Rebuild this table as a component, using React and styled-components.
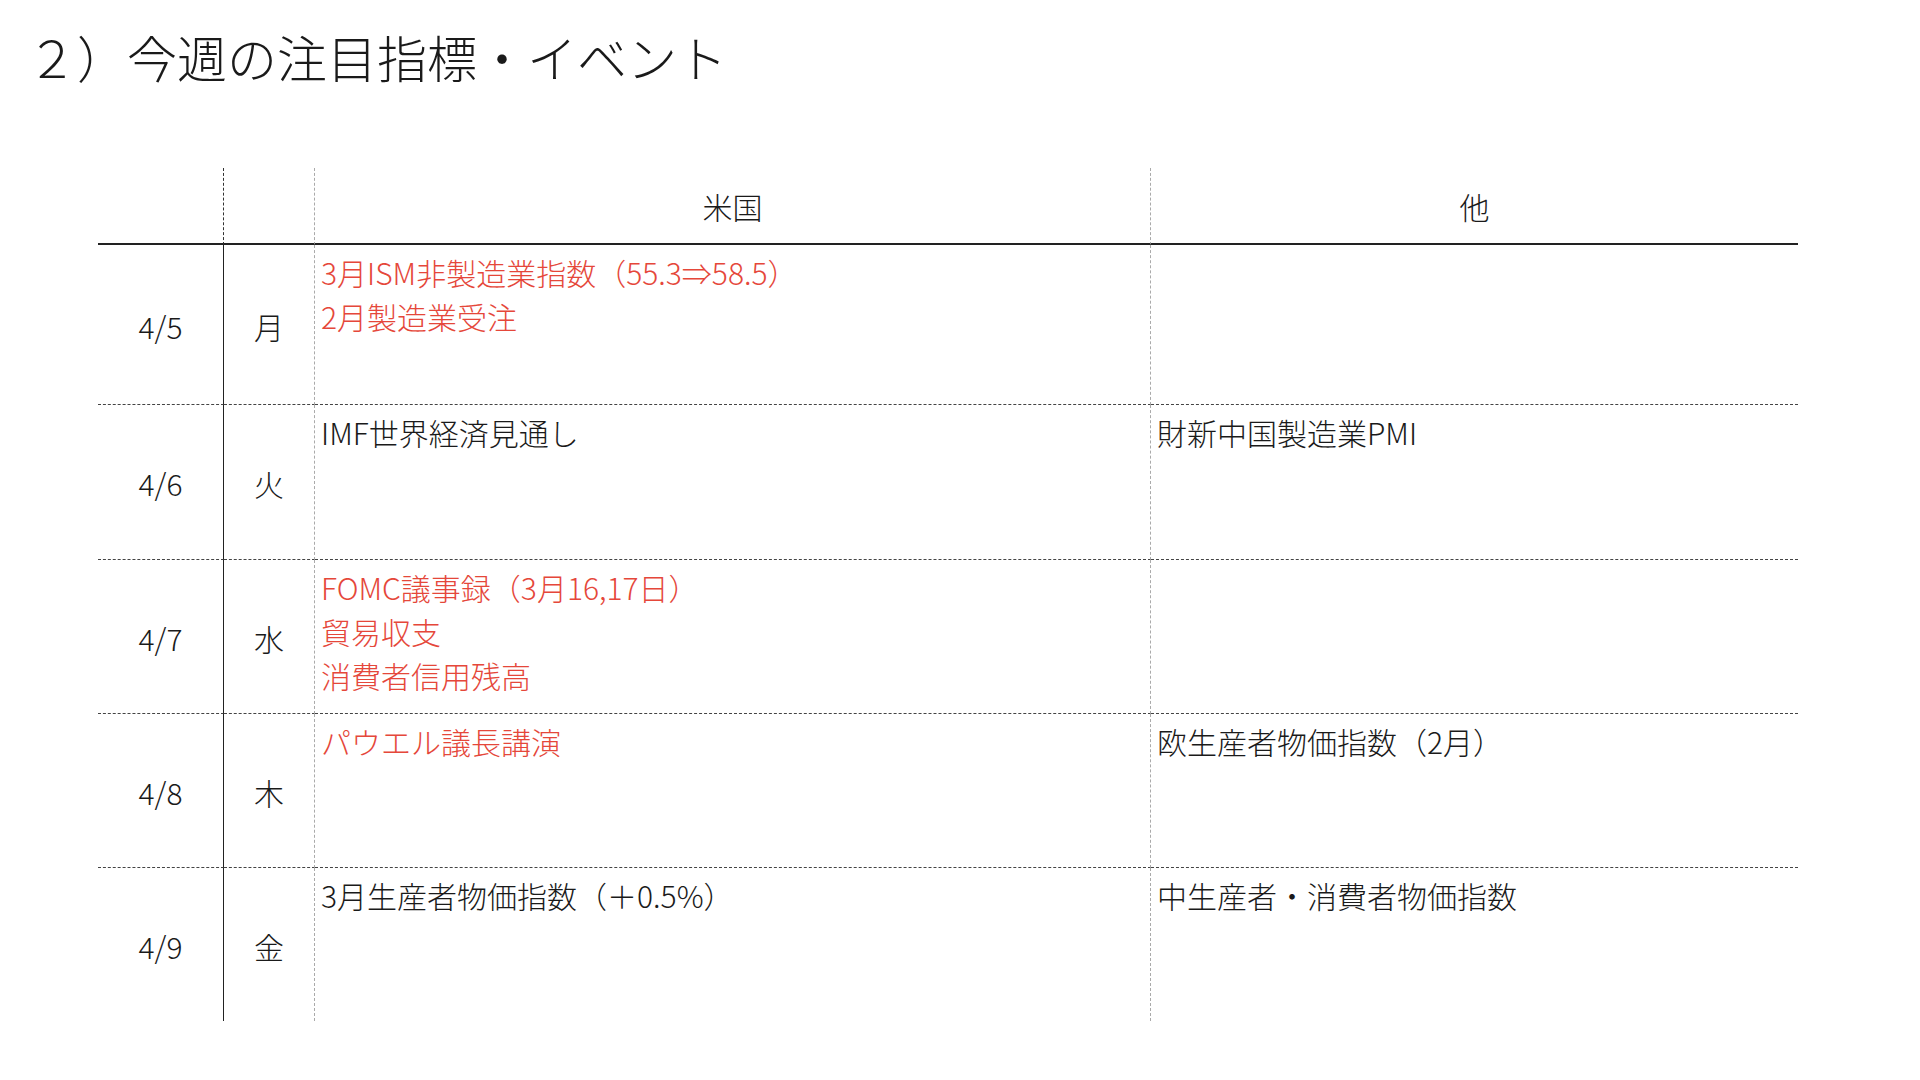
import styled, { createGlobalStyle } from 'styled-components';

const GlobalStyle = createGlobalStyle`
  html, body {
    margin: 0;
    padding: 0;
    background: #fff;
  }
  body {
    font-family: "Noto Sans CJK JP", "Noto Sans", sans-serif;
    color: #1a1a1a;
  }
`;

const events = [
  { date: '4/5', day: '月', us: ['3月ISM非製造業指数（55.3⇒58.5）', '2月製造業受注'], usHot: true, other: [] },
  { date: '4/6', day: '火', us: ['IMF世界経済見通し'], other: ['財新中国製造業PMI'] },
  { date: '4/7', day: '水', us: ['FOMC議事録（3月16,17日）', '貿易収支', '消費者信用残高'], usHot: true, other: [] },
  { date: '4/8', day: '木', us: ['パウエル議長講演'], usHot: true, other: ['欧生産者物価指数（2月）'] },
  { date: '4/9', day: '金', us: ['3月生産者物価指数（＋0.5%）'], other: ['中生産者・消費者物価指数'] },
];

const rowHeights = [160, 155, 154, 154, 153];

const Page = styled.div`
  width: 1920px;
  height: 1080px;
  box-sizing: border-box;
  padding: 26px 0 0 98px;
  overflow: hidden;
`;

const Title = styled.h1`
  margin: 0 0 0 -71px;
  font-size: 50px;
  line-height: 60px;
  font-weight: 300;
  letter-spacing: 0;
`;

const Table = styled.div`
  margin-top: 82px;
  display: grid;
  grid-template-columns: 126px 91px 836px 647px;
  grid-template-rows: 77px ${rowHeights.map((h) => `${h}px`).join(' ')};
  width: 1700px;
`;

const HeadCell = styled.div`
  box-sizing: border-box;
  display: flex;
  align-items: center;
  justify-content: center;
  font-size: 30px;
  font-weight: 300;
  border-bottom: 2px solid #222;
  border-right: ${(p) =>
    p.$edge === 'strong' ? '1px dashed #333' : p.$edge === 'light' ? '1px dashed #aaa' : 'none'};
  padding-top: 1px;
`;

const DateCell = styled.div`
  box-sizing: border-box;
  display: flex;
  align-items: center;
  justify-content: center;
  font-size: 30px;
  font-weight: 300;
  border-bottom: ${(p) => (p.$last ? 'none' : '1px dashed #444')};
  border-right: ${(p) => (p.$solid ? '1.5px solid #222' : '1px dashed #aaa')};
  padding-top: 2px;
`;

const EventCell = styled.div`
  box-sizing: border-box;
  padding: 5px 6px 0;
  font-size: 30px;
  font-weight: 300;
  line-height: 44px;
  color: ${(p) => (p.$hot ? '#e5473a' : '#1a1a1a')};
  border-bottom: ${(p) => (p.$last ? 'none' : '1px dashed #444')};
  border-right: ${(p) => (p.$divider ? '1px dashed #aaa' : 'none')};
`;

const Line = styled.div`
  white-space: nowrap;
`;

export default function App() {
  return (
    <Page>
      <GlobalStyle />
      <Title>２）今週の注目指標・イベント</Title>
      <Table>
        <HeadCell $edge="strong" />
        <HeadCell $edge="light" />
        <HeadCell $edge="light">米国</HeadCell>
        <HeadCell>他</HeadCell>
        {events.map((ev, i) => {
          const last = i === events.length - 1;
          return [
            <DateCell key={`${ev.date}-d`} $solid $last={last}>{ev.date}</DateCell>,
            <DateCell key={`${ev.date}-w`} $last={last}>{ev.day}</DateCell>,
            <EventCell key={`${ev.date}-u`} $hot={ev.usHot} $divider $last={last}>
              {ev.us.map((t) => <Line key={t}>{t}</Line>)}
            </EventCell>,
            <EventCell key={`${ev.date}-o`} $last={last}>
              {ev.other.map((t) => <Line key={t}>{t}</Line>)}
            </EventCell>,
          ];
        })}
      </Table>
    </Page>
  );
}
